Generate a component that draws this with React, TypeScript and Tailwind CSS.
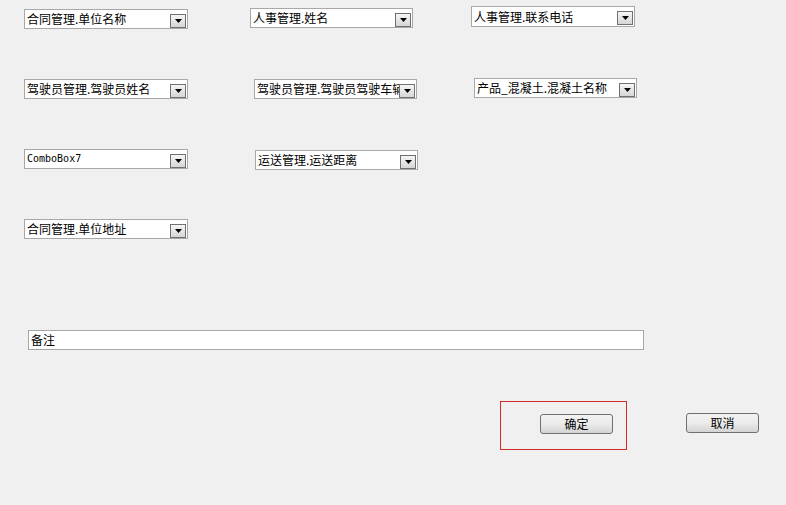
type ComboProps = {
  text: string;
  className: string;
  mono?: boolean;
};

const Combo = ({ text, className, mono }: ComboProps) => (
  <div className={`flex h-[20px] shrink-0 items-center border border-[#a8a8a8] bg-white pr-[1px] ${className}`}>
    <div
      className={`flex-1 overflow-hidden whitespace-nowrap pl-[2px] text-black ${
        mono
          ? "font-['DejaVu_Sans_Mono',monospace] text-[10px] leading-[16px]"
          : "text-[12px] leading-[16px]"
      }`}
    >
      {text}
    </div>
    <div className="mt-[3px] flex h-[14px] w-[16px] shrink-0 items-center justify-center border border-[#707070] bg-gradient-to-b from-[#f6f6f6] to-[#d6d6d6]">
      <svg width="7" height="4" viewBox="0 0 7 4">
        <path d="M0 0h7L3.5 4z" fill="#000" />
      </svg>
    </div>
  </div>
);

const WinButton = ({ label, className }: { label: string; className?: string }) => (
  <div
    className={`flex h-[20px] w-[73px] shrink-0 items-center justify-center rounded-[3px] border border-[#707070] bg-gradient-to-b from-[#f3f3f3] via-[#ebebeb] to-[#d4d4d4] text-[12px] leading-[16px] text-black ${className ?? ""}`}
  >
    {label}
  </div>
);

export default function App() {
  return (
    <div className="flex h-[505px] w-[786px] flex-col overflow-hidden bg-[#f0f0f0] font-['Noto_Sans_CJK_SC','Liberation_Sans',sans-serif]">
      {/* row 1 */}
      <div className="flex h-[70px] items-start">
        <Combo text="合同管理.单位名称" className="ml-[24px] mt-[9px] w-[164px]" />
        <Combo text="人事管理.姓名" className="ml-[62px] mt-[8px] w-[163px]" />
        <Combo text="人事管理.联系电话" className="ml-[58px] mt-[6px] w-[164px] h-[21px]" />
      </div>

      {/* row 2 */}
      <div className="flex h-[70px] items-start">
        <Combo text="驾驶员管理.驾驶员姓名" className="ml-[24px] mt-[9px] w-[164px]" />
        <Combo text="驾驶员管理.驾驶员驾驶车辆" className="ml-[66px] mt-[9px] w-[163px]" />
        <Combo text="产品_混凝土.混凝土名称" className="ml-[57px] mt-[8px] w-[163px]" />
      </div>

      {/* row 3 */}
      <div className="flex h-[70px] items-start">
        <Combo text="ComboBox7" mono className="ml-[24px] mt-[9px] w-[164px]" />
        <Combo text="运送管理.运送距离" className="ml-[67px] mt-[10px] w-[163px]" />
      </div>

      {/* row 4 */}
      <div className="flex h-[70px] items-start">
        <Combo text="合同管理.单位地址" className="ml-[24px] mt-[9px] w-[164px]" />
      </div>

      {/* remark */}
      <div className="ml-[28px] mt-[50px] flex h-[20px] w-[616px] items-center border border-[#a8a8a8] bg-white pl-[2px] text-[12px] leading-[16px] text-black">
        备注
      </div>

      {/* buttons */}
      <div className="mt-[51px] flex items-start">
        <div className="ml-[500px] flex h-[49px] w-[127px] shrink-0 items-start border border-[#d42a2a] pl-[39px] pt-[12px]">
          <WinButton label="确定" />
        </div>
        <WinButton label="取消" className="ml-[59px] mt-[12px]" />
      </div>
    </div>
  );
}
